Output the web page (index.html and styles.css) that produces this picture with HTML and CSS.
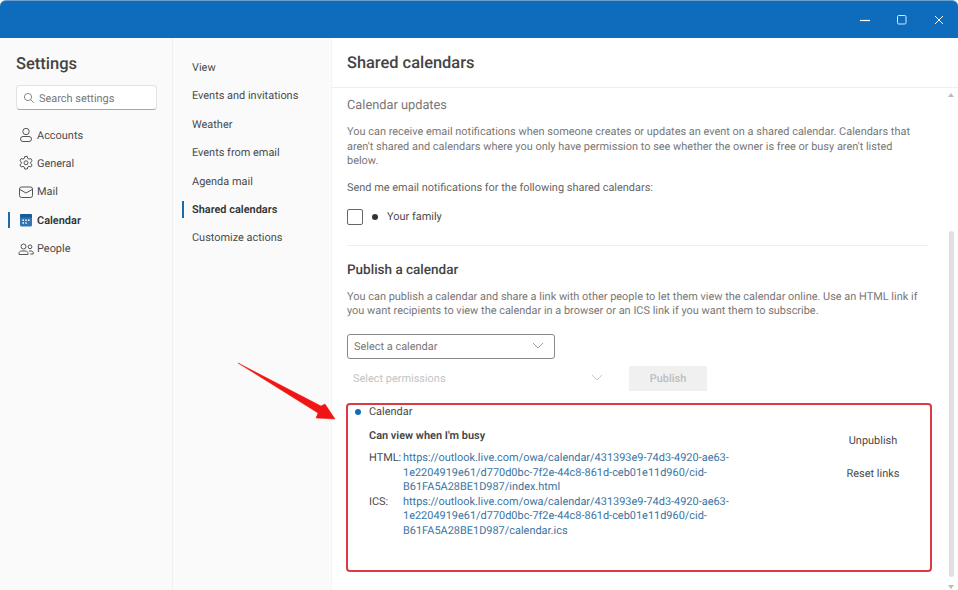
FILE: index.html
```html
<!DOCTYPE html>
<html lang="en">
<head>
	<meta charset="UTF-8">
	<title>Settings - Shared calendars</title>
	<link rel="stylesheet" href="styles.css">
</head>
<body>
	<div class="titlebar">
		<svg class="winbtn" width="12" height="12" viewBox="0 0 12 12"><path d="M1 6.500h10" stroke="#fff" stroke-width="1.200" fill="none"/></svg>
		<svg class="winbtn" width="12" height="12" viewBox="0 0 12 12"><rect x="1.500" y="1.500" width="8.500" height="8.500" rx="1.200" stroke="#dce9f5" stroke-width="1" fill="none"/></svg>
		<svg class="winbtn" width="12" height="12" viewBox="0 0 12 12"><path d="M2 2l8 8M10 2l-8 8" stroke="#fff" stroke-width="1" fill="none"/></svg>
	</div>
	<div class="app">
		<div class="left">
			<h1 class="settings">Settings</h1>
			<div class="search">
				<svg width="12" height="12" viewBox="0 0 12 12"><circle cx="5" cy="5" r="3.600" stroke="#888" fill="none"/><path d="M7.700 7.700l3 3" stroke="#888" fill="none"/></svg>
				<span>Search settings</span>
			</div>
			<div class="nav">
				<div class="nav-item">
					<svg width="16" height="16" viewBox="0 0 16 16" fill="none" stroke="#555"><circle cx="8" cy="4.500" r="3.200"/><rect x="2.500" y="9.500" width="11" height="5" rx="2.500"/></svg>
					Accounts
				</div>
				<div class="nav-item">
					<svg width="16" height="16" viewBox="0 0 16 16" fill="none" stroke="#555"><path d="M6.700 1.500h2.600l.4 1.900 1.300.7 1.800-.6 1.300 2.200-1.400 1.300v1.500l1.400 1.300-1.300 2.200-1.800-.6-1.300.7-.4 1.900H6.700l-.4-1.900-1.300-.7-1.800.6-1.300-2.200 1.400-1.300V7L1.900 5.700l1.300-2.200 1.800.6 1.300-.7z"/><circle cx="8" cy="7.800" r="2"/></svg>
					General
				</div>
				<div class="nav-item">
					<svg width="16" height="16" viewBox="0 0 16 16" fill="none" stroke="#555"><rect x="1.500" y="3" width="13" height="10.500" rx="2"/><path d="M1.800 5.500L8 9l6.200-3.500"/></svg>
					Mail
				</div>
				<div class="nav-item active">
					<svg width="16" height="16" viewBox="0 0 16 16"><rect x="2" y="2" width="12" height="12.500" rx="1.500" fill="#2f74b5"/><rect x="2" y="2" width="12" height="3.500" rx="1.200" fill="#175a96"/><path d="M4.500 7.500h1.500v1.500H4.500zM7.300 7.500h1.500v1.500H7.300zM10 7.500h1.500v1.500H10zM4.500 10.300h1.500v1.500H4.500zM7.300 10.300h1.500v1.500H7.300z" fill="#fff"/></svg>
					Calendar
				</div>
				<div class="nav-item">
					<svg width="16" height="16" viewBox="0 0 16 16" fill="none" stroke="#555"><circle cx="5.500" cy="5.500" r="2.500"/><circle cx="12" cy="5.800" r="1.900"/><path d="M1 13.500v-1c0-1.500 1-2.500 2.500-2.500h4c1.500 0 2.500 1 2.500 2.500v1zM11 10h2c1.300 0 2.200.8 2.200 2v1h-3"/></svg>
					People
				</div>
			</div>
		</div>
		<div class="middle">
			<div class="sub-item">View</div>
			<div class="sub-item">Events and invitations</div>
			<div class="sub-item">Weather</div>
			<div class="sub-item">Events from email</div>
			<div class="sub-item">Agenda mail</div>
			<div class="sub-item active">Shared calendars</div>
			<div class="sub-item">Customize actions</div>
		</div>
		<div class="main">
			<div class="main-head">Shared calendars</div>
			<div class="scroll">
				<div class="content">
					<h2 class="updates">Calendar updates</h2>
					<p class="para">You can receive email notifications when someone creates or updates an event on a shared calendar. Calendars that aren't shared and calendars where you only have permission to see whether the owner is free or busy aren't listed below.</p>
					<p class="send">Send me email notifications for the following shared calendars:</p>
					<div class="check-row">
						<span class="checkbox"></span>
						<span class="dot"></span>
						Your family
					</div>
					<hr class="rule">
					<h2 class="publish-title">Publish a calendar</h2>
					<p class="para publish-para">You can publish a calendar and share a link with other people to let them view the calendar online. Use an HTML link if you want recipients to view the calendar in a browser or an ICS link if you want them to subscribe.</p>
					<div class="select">
						Select a calendar
						<svg width="12" height="8" viewBox="0 0 12 8"><path d="M1 1l5 5 5-5" stroke="#999" fill="none"/></svg>
					</div>
					<div class="perm-row">
						<div class="perm">
							Select permissions
							<svg width="12" height="8" viewBox="0 0 12 8"><path d="M1 1l5 5 5-5" stroke="#c8c8c8" fill="none"/></svg>
						</div>
						<div class="publish-btn">Publish</div>
					</div>
					<div class="published">
						<div class="pub-links">
							<div class="pub-name"><span class="dot blue"></span>Calendar</div>
							<div class="pub-perm">Can view when I'm busy</div>
							<div class="link-row">
								<span class="link-label">HTML:</span>
								<a class="link">https://outlook.live.com/owa/calendar/431393e9-74d3-4920-ae63-1e2204919e61/d770d0bc-7f2e-44c8-861d-ceb01e11d960/cid-B61FA5A28BE1D987/index.html</a>
							</div>
							<div class="link-row">
								<span class="link-label">ICS:</span>
								<a class="link">https://outlook.live.com/owa/calendar/431393e9-74d3-4920-ae63-1e2204919e61/d770d0bc-7f2e-44c8-861d-ceb01e11d960/cid-B61FA5A28BE1D987/calendar.ics</a>
							</div>
						</div>
						<div class="pub-actions">
							<div>Unpublish</div>
							<div>Reset links</div>
						</div>
					</div>
				</div>
				<div class="scrollbar">
					<svg width="8" height="6" viewBox="0 0 8 6"><path d="M4 1l3 4H1z" fill="#bbb"/></svg>
					<div class="track"><div class="thumb"></div></div>
					<svg width="8" height="6" viewBox="0 0 8 6"><path d="M4 5L1 1h6z" fill="#bbb"/></svg>
				</div>
			</div>
		</div>
	</div>
	<svg class="arrow" width="958" height="590" viewBox="0 0 958 590"><polygon points="238,363 321,406 325,404 335,419 316,418 318,413" fill="#f21414" stroke="#f21414" stroke-width="0.500"/></svg>
</body>
</html>
```

FILE: styles.css
```css
* {
	box-sizing: border-box;
}
body {
	margin: 0;
	width: 958px;
	height: 590px;
	overflow: hidden;
	background: #fff;
	font-family: Roboto, "Noto Sans", sans-serif;
	font-size: 10.940px;
	color: #4a4a4a;
	text-rendering: geometricPrecision;
}
.titlebar {
	height: 38px;
	background: #0f6cbd;
	border-top: 1px solid #6b9fcf;
	border-radius: 6px 6px 0 0;
	display: flex;
	justify-content: flex-end;
	align-items: center;
	padding-right: 13px;
	gap: 25px;
}
.winbtn {
	display: block;
}
.app {
	display: grid;
	grid-template-columns: 173px 159px 1fr;
	height: 552px;
}
.left {
	background: #fafafa;
	border-right: 1px solid #f0f0f0;
	padding: 15px 15px 0 16px;
}
.settings {
	margin: 0;
	font-size: 16.500px;
	line-height: 24px;
	font-weight: 500;
	color: #444;
}
.search {
	margin-top: 8px;
	height: 25px;
	background: #fff;
	border: 1px solid #e2e2e2;
	border-bottom: 1px solid #a8a8a8;
	border-radius: 4px;
	display: flex;
	align-items: center;
	gap: 4px;
	padding: 1px 0 0 6px;
	color: #777;
}
.nav {
	margin-top: 10.900px;
	margin-left: -8px;
}
.nav-item {
	height: 28.400px;
	display: flex;
	align-items: center;
	gap: 3px;
	padding-left: 8px;
	border-left: 2px solid transparent;
}
.nav-item.active {
	font-weight: 600;
	color: #333;
	position: relative;
}
.nav-item.active::before {
	content: "";
	position: absolute;
	left: -2px;
	top: 6px;
	bottom: 6px;
	width: 2px;
	background: #1c6aa8;
}
.middle {
	background: #fafafa;
	padding-top: 15.400px;
	border-right: 1px solid #f4f4f4;
}
.sub-item {
	height: 28.400px;
	display: flex;
	align-items: center;
	padding-left: 19px;
	position: relative;
}
.sub-item.active {
	font-weight: 600;
	color: #333;
}
.sub-item.active::before {
	content: "";
	position: absolute;
	left: 9px;
	top: 6px;
	bottom: 6px;
	width: 2px;
	background: #1c6aa8;
}
.main {
	display: flex;
	flex-direction: column;
	min-height: 0;
}
.main-head {
	height: 50px;
	flex: none;
	padding: 15px 0 0 15px;
	font-size: 16.400px;
	line-height: 22px;
	font-weight: 500;
	color: #444;
	border-bottom: 1px solid #efefef;
}
.scroll {
	flex: 1;
	display: flex;
	min-height: 0;
}
.content {
	width: 600px;
	padding: 9px 0 0 15px;
}
.updates {
	margin: 0;
	font-size: 12.800px;
	line-height: 18px;
	font-weight: 400;
	color: #777;
}
.para {
	margin: 10px 0 0;
	line-height: 14.600px;
	color: #777;
	width: 574px;
}
.send {
	margin: 11px 0 0;
	line-height: 15px;
	color: #666;
}
.check-row {
	margin-top: 14px;
	height: 16px;
	display: flex;
	align-items: center;
}
.checkbox {
	width: 16px;
	height: 16px;
	border: 1px solid #666;
	border-radius: 2px;
	margin-right: 9px;
}
.dot {
	width: 6px;
	height: 6px;
	border-radius: 50%;
	background: #333;
	margin-right: 9px;
}
.rule {
	margin: 20px 0 0;
	width: 581px;
	border: 0;
	border-top: 1px solid #eee;
}
.publish-title {
	margin: 14px 0 0;
	font-size: 13.500px;
	line-height: 20px;
	font-weight: 500;
	color: #444;
}
.publish-para {
	margin-top: 10px;
}
.select {
	margin-top: 15px;
	width: 208px;
	height: 25px;
	border: 1px solid #8a8a8a;
	border-radius: 3px;
	display: flex;
	align-items: center;
	justify-content: space-between;
	padding: 0 10px 0 6px;
	color: #777;
}
.perm-row {
	margin-top: 7px;
	display: flex;
	align-items: center;
}
.perm {
	width: 282px;
	height: 25px;
	display: flex;
	align-items: center;
	justify-content: space-between;
	padding: 0 26px 0 6px;
	color: #c4c4c4;
}
.publish-btn {
	width: 78px;
	height: 25px;
	background: #f0f0f0;
	color: #bdbdbd;
	font-weight: 500;
	display: flex;
	align-items: center;
	justify-content: center;
}
.published {
	margin-top: 12px;
	margin-left: -1px;
	width: 586px;
	height: 169px;
	border: 2px solid #dc3a42;
	border-radius: 4px;
	display: flex;
	padding: 0 0 0 21px;
}
.pub-links {
	width: 368px;
}
.pub-name {
	margin-left: -14px;
	height: 14px;
	display: flex;
	align-items: center;
}
.dot.blue {
	background: #0f6cbd;
	margin-right: 8px;
}
.pub-perm {
	margin-top: 9px;
	line-height: 16px;
	font-weight: 600;
	color: #444;
}
.link-row {
	display: flex;
	line-height: 14.600px;
}
.pub-perm + .link-row {
	margin-top: 7px;
}
.link-label {
	width: 34px;
	flex: none;
}
.link {
	color: #3a74a3;
	overflow-wrap: anywhere;
}
.pub-actions {
	margin-left: 91px;
	padding-top: 28px;
	width: 90px;
	text-align: center;
}
.pub-actions div {
	line-height: 16px;
	margin-bottom: 17px;
}
.scrollbar {
	margin-left: 15px;
	width: 8px;
	padding-top: 4px;
	display: flex;
	flex-direction: column;
	align-items: center;
}
.track {
	flex: 1;
	padding-top: 133px;
	padding-bottom: 7px;
	width: 5px;
	display: flex;
}
.thumb {
	flex: 1;
	background: #e0e0e0;
	border-radius: 3px;
}
.arrow {
	position: absolute;
	left: 0;
	top: 0;
	pointer-events: none;
}
```
